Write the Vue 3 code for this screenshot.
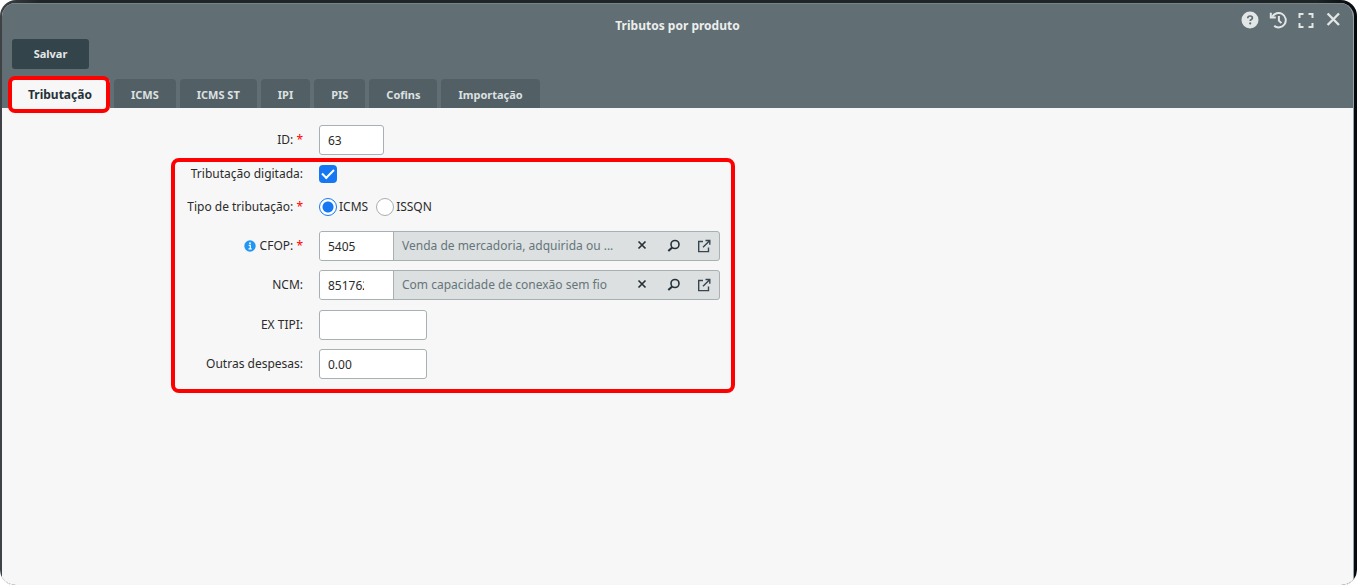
<script setup>
import { ref } from 'vue'

const tabs = ['Tributação', 'ICMS', 'ICMS ST', 'IPI', 'PIS', 'Cofins', 'Importação']
const activeTab = ref('Tributação')
const id = ref('63')
const typed = ref(true)
const kind = ref('ICMS')
const exTipi = ref('')
const otherCosts = ref('0.00')
const lookups = ref([
  { id: 'cfop', label: 'CFOP:', required: true, info: true, code: '5405', text: 'Venda de mercadoria, adquirida ou ...' },
  { id: 'ncm', label: 'NCM:', required: false, info: false, code: '85176262', text: 'Com capacidade de conexão sem fio' },
])
</script>

<template>
  <div class="screen">
    <main class="window">
      <header class="head">
        <div class="titlebar">
          <h1>Tributos por produto</h1>
          <div class="tools">
            <button type="button" aria-label="Ajuda">
              <svg width="18" height="18" viewBox="0 0 18 18">
                <circle cx="9" cy="9" r="8.5" fill="#e3e6e7" />
                <path d="M6.7 7.2C6.8 5.7 7.8 5 9.1 5c1.300 0 2.300.7 2.300 1.900 0 1.700-2.200 1.600-2.200 3.200" fill="none" stroke="#616e73" stroke-width="1.700" />
                <circle cx="9.200" cy="12.400" r="1.100" fill="#616e73" />
              </svg>
            </button>
            <button type="button" aria-label="Histórico">
              <svg width="18" height="18" viewBox="0 0 18 18" fill="none" stroke="#e3e6e7" stroke-width="2">
                <path d="M3.200 5.800A7.200 7.200 0 1 1 5.200 14.900" />
                <path d="M1.800 1.800v4.800h5" />
                <path d="M9.900 5v4.600l2.500 2.500" />
              </svg>
            </button>
            <button type="button" aria-label="Tela cheia">
              <svg width="18" height="18" viewBox="0 0 18 18" fill="none" stroke="#e3e6e7" stroke-width="2">
                <path d="M2.500 7V3H6.500M11.500 3H15.500V7M15.500 12V16H11.500M6.500 16H2.500V12" />
              </svg>
            </button>
            <button type="button" aria-label="Fechar">
              <svg width="18" height="18" viewBox="0 0 18 18" fill="none" stroke="#e3e6e7" stroke-width="2.400">
                <path d="M2.600 2.500L14 14M14 2.500L2.600 14" />
              </svg>
            </button>
          </div>
        </div>
        <div class="actions">
          <button type="button" class="save">Salvar</button>
        </div>
        <nav class="tabs" role="tablist">
          <button
            v-for="tab in tabs"
            :key="tab"
            type="button"
            role="tab"
            class="tab"
            :class="{ active: tab === activeTab }"
            :aria-selected="tab === activeTab"
            @click="activeTab = tab"
          >{{ tab }}</button>
        </nav>
      </header>

      <form class="form" @submit.prevent>
        <div class="row first">
          <label class="name" for="id">ID: <b>*</b></label>
          <input id="id" v-model="id" class="box short" type="text" />
        </div>

        <section class="marked">
          <div class="row choice">
            <label class="name" for="typed">Tributação digitada:</label>
            <input id="typed" v-model="typed" class="check" type="checkbox" />
          </div>
          <div class="row choice" role="radiogroup" aria-labelledby="kind">
            <span id="kind" class="name">Tipo de tributação: <b>*</b></span>
            <div class="radios">
              <label v-for="option in ['ICMS', 'ISSQN']" :key="option">
                <input v-model="kind" type="radio" name="kind" :value="option" />{{ option }}
              </label>
            </div>
          </div>
          <div v-for="item in lookups" :key="item.id" class="row field">
            <label class="name" :for="item.id">
              <svg v-if="item.info" class="info" width="12" height="12" viewBox="0 0 12 12">
                <circle cx="6" cy="6" r="5.700" fill="#2196f3" />
                <path d="M4.700 5.300H6.300V8.700M4.500 8.900H7.700" fill="none" stroke="#fff" stroke-width="1.200" />
                <circle cx="6" cy="3.200" r="0.900" fill="#fff" />
              </svg>
              {{ item.label }} <b v-if="item.required">*</b>
            </label>
            <div class="lookup">
              <div class="code"><input :id="item.id" v-model="item.code" type="text" /></div>
              <span class="desc">{{ item.text }}</span>
              <button type="button" aria-label="Limpar">
                <svg width="14" height="14" viewBox="0 0 14 14" fill="none" stroke="#263238" stroke-width="1.700">
                  <path d="M3.500 2.500L10.500 9.500M10.500 2.500L3.500 9.500" />
                </svg>
              </button>
              <button type="button" aria-label="Pesquisar">
                <svg width="14" height="14" viewBox="0 0 14 14" fill="none" stroke="#263238" stroke-width="1.600">
                  <circle cx="9" cy="5.500" r="4" />
                  <path d="M6.200 8.400L2.300 12" stroke-width="2" />
                </svg>
              </button>
              <button type="button" aria-label="Abrir">
                <svg width="14" height="14" viewBox="0 0 14 14" fill="none" stroke="#37474f" stroke-width="1.400">
                  <path d="M6 2.500H1.700V12.600H11.500V8.500M8.500 1.500H12.800V5.800M12.600 1.700L6 8.300" />
                </svg>
              </button>
            </div>
          </div>
          <div class="row field plain">
            <label class="name" for="extipi">EX TIPI:</label>
            <input id="extipi" v-model="exTipi" class="box" type="text" />
          </div>
          <div class="row field plain">
            <label class="name" for="other">Outras despesas:</label>
            <input id="other" v-model="otherCosts" class="box" type="text" />
          </div>
        </section>
      </form>
    </main>
  </div>
</template>

<style>
body {
  background: #fff;
}
</style>

<style scoped>
.screen,
.screen * {
  box-sizing: border-box;
}
.screen {
  min-height: 100vh;
  display: flex;
  padding: 3px 3px 0 2px;
  border-bottom: 1px solid #fff;
  border-radius: 16px;
  background: linear-gradient(90deg, #3f4345, #1f2426 3%, #1f2426 97%, #05090b);
  overflow: hidden;
  font-family: "Noto Sans", "Open Sans", sans-serif;
  font-size: 12px;
  line-height: 16px;
  color: #2b2b2b;
}
button,
input {
  font: inherit;
  color: inherit;
  margin: 0;
}
button {
  border: 0;
  padding: 0;
  background: none;
  cursor: pointer;
}
svg {
  display: block;
}
.window {
  flex: 1;
  min-width: 0;
  border-right: 1px solid #90a4a9;
  border-radius: 14px 14px 0 0;
  background: #f7f7f7;
  overflow: hidden;
}
.head {
  background: #616e73;
  border-top: 1px solid #74858a;
}
.titlebar {
  display: grid;
  grid-template-columns: 1fr auto 1fr;
  height: 35px;
}
h1 {
  grid-column: 2;
  margin: 14px 0 0;
  font-size: 12px;
  line-height: 16px;
  font-weight: 700;
  color: #eceeee;
}
.tools {
  display: flex;
  justify-content: flex-end;
  align-items: flex-start;
  gap: 10px;
  padding: 7px 10px 0 0;
}
.actions {
  padding: 0 10px;
}
.save {
  display: block;
  height: 30px;
  width: 77px;
  border-radius: 3px;
  background: #33444b;
  color: #e4e7e8;
  font-size: 11px;
  font-weight: 700;
}
.tabs {
  display: flex;
  gap: 4px;
  margin-top: 10px;
  padding-left: 9px;
}
.tab {
  position: relative;
  height: 29px;
  padding: 2px 17px 0;
  border-radius: 4px 4px 0 0;
  background: #525f65;
  color: #dde1e2;
  font-size: 11px;
  font-weight: 700;
}
.tab.active {
  padding-right: 18px;
  background: #f7f7f7;
  color: #263238;
  font-size: 12px;
}
.tab.active::after {
  content: "";
  position: absolute;
  inset: -3px 0 -5px -3px;
  border: 4px solid #f00;
  border-radius: 7px;
}
.form {
  padding: 17px 16px 0 169px;
}
.row {
  display: grid;
  grid-template-columns: 128px minmax(0, 1fr);
  column-gap: 16px;
  align-items: center;
}
.first {
  padding-left: 4px;
}
.name {
  text-align: right;
  white-space: nowrap;
}
.name b {
  color: #f00;
  font-weight: 400;
}
.info {
  display: inline-block;
  vertical-align: -2px;
}
.box {
  width: 108px;
  height: 30px;
  padding: 0 8px;
  border: 1px solid #a7b0b3;
  border-radius: 3px;
  background: #fff;
}
.short {
  width: 65px;
}
.marked {
  max-width: 564px;
  margin-top: 3px;
  padding: 0 11px 10px 0;
  border: 4px solid #f00;
  border-radius: 8px;
}
.choice {
  height: 23px;
  margin-bottom: 10px;
}
.field {
  height: 30px;
  margin-top: 9px;
}
.plain {
  margin-top: 10px;
}
.plain + .plain {
  margin-top: 9px;
}
.choice + .field {
  margin-top: 13px;
}
.check {
  appearance: none;
  width: 18px;
  height: 18px;
  border-radius: 4px;
  background: #1677f2;
  display: grid;
  place-items: center;
}
.check:checked::before {
  content: "";
  width: 10px;
  height: 5px;
  margin-bottom: 3px;
  border-left: 2px solid #fff;
  border-bottom: 2px solid #fff;
  transform: rotate(-45deg);
}
.radios,
.radios label {
  display: flex;
  align-items: center;
}
.radios {
  gap: 8px;
}
.radios label {
  gap: 2px;
}
.radios input {
  appearance: none;
  width: 18px;
  height: 18px;
  border: 1px solid #a7b0b3;
  border-radius: 50%;
  background: #fff;
}
.radios input:checked {
  border-color: #1677f2;
  background: radial-gradient(circle, #1677f2 5px, #fff 6px);
}
.lookup {
  display: flex;
  align-items: center;
  height: 30px;
  border: 1px solid #a7b0b3;
  border-radius: 3px;
  background: #dce0e1;
  overflow: hidden;
}
.code {
  flex: none;
  width: 74px;
  height: 100%;
  padding: 0 29px 0 8px;
  border-right: 1px solid #a7b0b3;
  background: #fff;
}
.code input {
  width: 100%;
  height: 100%;
  padding: 0;
  border: 0;
  background: none;
}
.desc {
  flex: 1;
  min-width: 0;
  padding-left: 8px;
  margin-right: 17px;
  overflow: hidden;
  text-overflow: ellipsis;
  white-space: nowrap;
  color: #66757a;
}
.lookup button {
  flex: none;
  margin-right: 17px;
}
.lookup button:last-child {
  margin-right: 8px;
}
</style>
